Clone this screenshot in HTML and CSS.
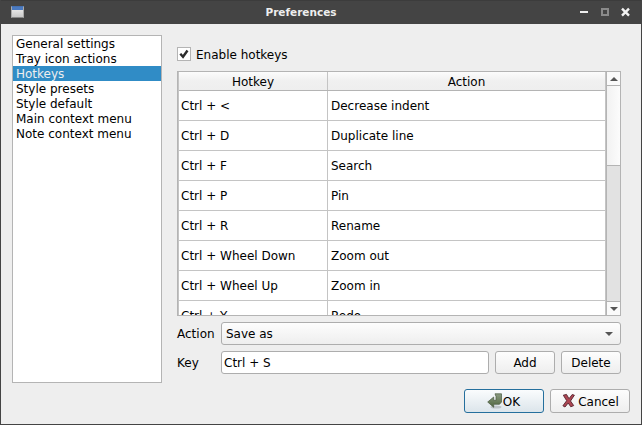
FILE: index.html
```html
<!DOCTYPE html>
<html lang="en">
<head>
<meta charset="utf-8">
<title>Preferences</title>
<link rel="stylesheet" href="styles.css">
</head>
<body>
<div class="window">
  <header class="titlebar">
    <span class="app-icon"></span>
    <h1 class="title">Preferences</h1>
    <svg class="controls" width="52" height="10" viewBox="0 0 52 10" shape-rendering="crispEdges">
      <path d="M1 4h8v2H1z" fill="#eee"/>
      <path d="M23 2h6v6h-6z" fill="none" stroke="#8a8a8a" stroke-width="2"/>
      <path d="M43 1.700l7 7M50 1.700L43 8.700" stroke="#f2f2f2" stroke-width="2.400" shape-rendering="auto"/>
    </svg>
  </header>
  <main class="content">
    <ul class="categories">
      <li>General settings</li>
      <li>Tray icon actions</li>
      <li class="selected">Hotkeys</li>
      <li>Style presets</li>
      <li>Style default</li>
      <li>Main context menu</li>
      <li>Note context menu</li>
    </ul>
    <section class="page">
      <div class="check-row">
        <span class="checkbox"><svg width="12" height="12" viewBox="0 0 12 12"><path d="M2.300 5.800L5 8.800L9.500 2.500" fill="none" stroke="#2c2c2c" stroke-width="2.400"/></svg></span>
        <span class="check-label">Enable hotkeys</span>
      </div>
      <div class="table-frame">
        <div class="table">
          <div class="row head"><span>Hotkey</span><span>Action</span></div>
          <div class="row"><span>Ctrl + &lt;</span><span>Decrease indent</span></div>
          <div class="row"><span>Ctrl + D</span><span>Duplicate line</span></div>
          <div class="row"><span>Ctrl + F</span><span>Search</span></div>
          <div class="row"><span>Ctrl + P</span><span>Pin</span></div>
          <div class="row"><span>Ctrl + R</span><span>Rename</span></div>
          <div class="row"><span>Ctrl + Wheel Down</span><span>Zoom out</span></div>
          <div class="row"><span>Ctrl + Wheel Up</span><span>Zoom in</span></div>
          <div class="row"><span>Ctrl + Y</span><span>Redo</span></div>
        </div>
        <div class="scrollbar">
          <span class="scroll-button up"><svg width="8" height="4" viewBox="0 0 8 4"><path d="M0 4L4 0L8 4z" fill="#555"/></svg></span>
          <span class="thumb"></span>
          <span class="scroll-button down"><svg width="8" height="4" viewBox="0 0 8 4"><path d="M0 0L4 4L8 0z" fill="#555"/></svg></span>
        </div>
      </div>
      <div class="form-row">
        <span class="label">Action</span>
        <div class="control combo"><span>Save as</span><svg width="8" height="4" viewBox="0 0 8 4"><path d="M0 0L4 4L8 0z" fill="#555"/></svg></div>
      </div>
      <div class="form-row">
        <span class="label">Key</span>
        <div class="control input">Ctrl + S</div>
        <div class="control button">Add</div>
        <div class="control button">Delete</div>
      </div>
    </section>
  </main>
  <footer class="actions">
    <div class="control dialog-button primary">
      <svg width="16" height="16" viewBox="0 0 16 16">
        <defs><linearGradient id="arrow" x1="0" y1="0" x2="0" y2="1"><stop offset="0" stop-color="#8a9b80"/><stop offset="1" stop-color="#50663f"/></linearGradient></defs>
        <ellipse cx="9" cy="14" rx="5.500" ry="1.500" fill="#000" opacity=".16"/>
        <path d="M8 .8H14.500V9L12.500 11.300H6.700V14.300L.7 9L6.700 4V7.300H9V3.500z" fill="url(#arrow)" stroke="#4a5a40" stroke-width=".7"/>
      </svg><span>OK</span>
    </div>
    <div class="control dialog-button cancel">
      <svg width="16" height="16" viewBox="0 0 16 16">
        <path d="M2.300 2.200L5.500 1.400L8 5.700L11.200 1.500L13.400 2.200L9.500 8L12.700 12.600L9.800 13.800L7.200 10L4 14L1.900 12.800L5.700 7.700z" fill="#ad4652" stroke="#572530" stroke-width=".9" stroke-linejoin="round"/>
      </svg><span>Cancel</span>
    </div>
  </footer>
</div>
</body>
</html>
```
FILE: styles.css
```css
* { box-sizing: border-box; }
body {
  margin: 0;
  font: 12px/15px "DejaVu Sans", sans-serif;
  color: #000;
}
svg { display: block; flex: none; }
.window {
  display: flex;
  flex-direction: column;
  width: 642px;
  height: 425px;
  border: 1px solid #444;
  border-top: 0;
  background: #eee;
  overflow: hidden;
}
.titlebar {
  display: grid;
  grid-template-columns: 52px 1fr 52px;
  align-items: center;
  height: 24px;
  flex: none;
  padding: 0 10px 1px;
  background: #444;
  border-top: 1px solid #3c3c3c;
}
.app-icon {
  width: 13px;
  height: 12px;
  border: 1px solid;
  border-color: #4571b0 #aaa #888;
  background: linear-gradient(#4b7ac0 0 3px, #e6e6e6 3px, #c9c9c9);
}
.title {
  margin: 0;
  padding-right: 40px;
  font-size: 10.5px;
  line-height: 14px;
  text-align: center;
  color: #eee;
}
.content {
  display: flex;
  gap: 15px;
  padding: 11px 20px 0 11px;
}
.categories {
  width: 150px;
  height: 348px;
  margin: 0;
  padding: 0;
  list-style: none;
  border: 1px solid #b4b4b4;
  background: #fff;
}
.categories li { height: 15px; line-height: 17px; padding-left: 3px; }
.categories .selected { background: #308cc6; color: #eee; }
.page { width: 444px; }
.check-row {
  display: flex;
  align-items: center;
  gap: 5px;
  height: 16px;
  margin: 11px 0 9px;
}
.check-label { line-height: 16px; padding-top: 1px; }
.checkbox {
  width: 14px;
  height: 14px;
  border: 1px solid #b4b4b4;
  background: #fff;
}
.table-frame {
  display: flex;
  height: 245px;
  border: 1px solid #b4b4b4;
  background: #fff;
  overflow: hidden;
}
.table {
  width: 428px;
  border-left: 1px solid #c4c4c4;
  border-right: 1px solid #c4c4c4;
}
.row {
  display: grid;
  grid-template-columns: 149px 1fr;
  height: 30px;
  line-height: 31px;
  border-bottom: 1px solid #c4c4c4;
}
.row span { height: 29px; padding-left: 3px; }
.row span:first-child { padding-left: 2px; border-right: 1px solid #c4c4c4; }
.row.head {
  height: 19px;
  line-height: 21px;
  text-align: center;
  background: linear-gradient(#fcfcfc, #f0f0f0 50%, #eee);
  border-color: #b4b4b4;
}
.row.head span { height: 18px; padding: 0; }
.scrollbar {
  display: flex;
  flex-direction: column;
  width: 14px;
  border-left: 1px solid #b4b4b4;
  background: #e2e2e2;
}
.scroll-button {
  display: grid;
  place-items: center;
  height: 14px;
  background: #fafafa;
}
.scroll-button.up { border-bottom: 1px solid #b4b4b4; }
.scroll-button.down { border-top: 1px solid #b4b4b4; margin-top: auto; }
.thumb {
  height: 80px;
  background: linear-gradient(90deg, #f2f2f2, #fcfcfc);
  border-bottom: 1px solid #b4b4b4;
}
.form-row { display: flex; height: 23px; margin-top: 6px; line-height: 25px; }
.label { width: 44px; }
.control {
  border: 1px solid #adadad;
  border-radius: 3px;
  background: linear-gradient(#fdfdfd, #eee);
  line-height: 23px;
}
.combo {
  display: flex;
  flex: 1;
  justify-content: space-between;
  align-items: center;
  padding: 0 7px 0 4px;
}
.combo span { height: 21px; }
.input { width: 268px; padding-left: 2px; background: #fff; }
.button { width: 60px; margin-left: 6px; text-align: center; }
.actions {
  display: flex;
  justify-content: flex-end;
  gap: 6px;
  padding: 6px 11px 0 0;
}
.dialog-button {
  display: flex;
  align-items: center;
  justify-content: center;
  width: 80px;
  height: 24px;
  line-height: 24px;
}
.dialog-button span { height: 22px; }
.cancel { gap: 1px; }
.primary { border-color: #256f9d; background: linear-gradient(#fafcfd, #dce5eb); }
.primary svg { margin-left: -1px; }
```
